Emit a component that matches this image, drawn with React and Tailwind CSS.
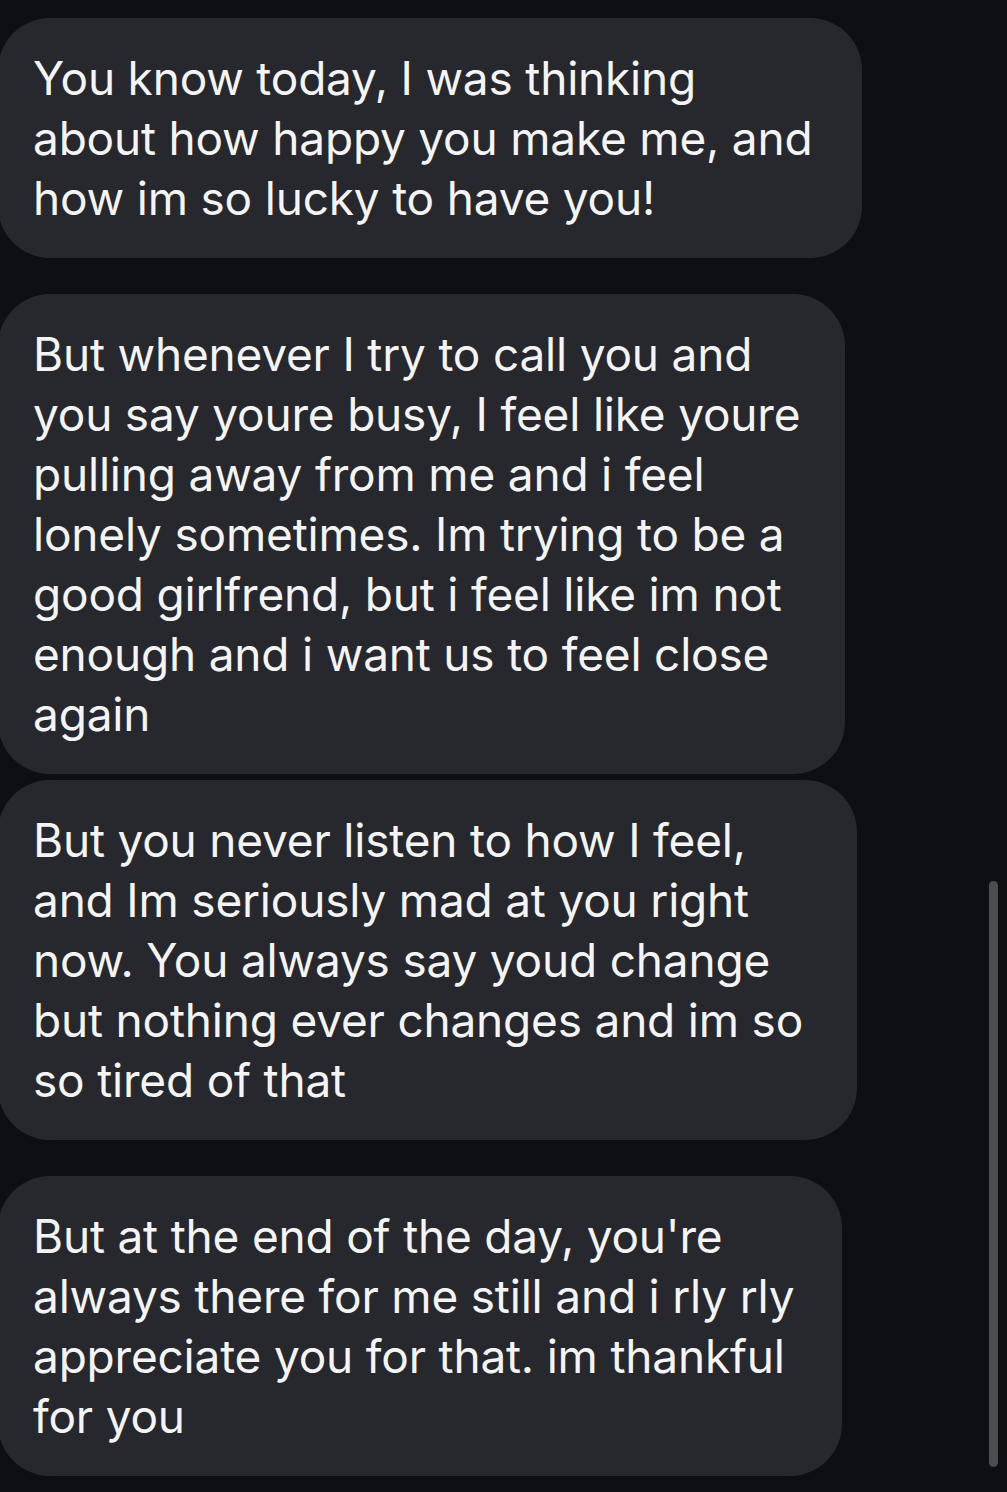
const messages = [
  {
    width: 'w-[864px]',
    lines: [
      'You know today, I was thinking',
      'about how happy you make me, and',
      'how im so lucky to have you!',
    ],
    gap: 'mb-[36px]',
  },
  {
    width: 'w-[847px]',
    lines: [
      'But whenever I try to call you and',
      'you say youre busy, I feel like youre',
      'pulling away from me and i feel',
      'lonely sometimes. Im trying to be a',
      'good girlfrend, but i feel like im not',
      'enough and i want us to feel close',
      'again',
    ],
    gap: 'mb-[6px]',
  },
  {
    width: 'w-[859px]',
    lines: [
      'But you never listen to how I feel,',
      'and Im seriously mad at you right',
      'now. You always say youd change',
      'but nothing ever changes and im so',
      'so tired of that',
    ],
    gap: 'mb-[36px]',
  },
  {
    width: 'w-[844px]',
    lines: [
      "But at the end of the day, you're",
      'always there for me still and i rly rly',
      'appreciate you for that. im thankful',
      'for you',
    ],
    gap: '',
  },
];

const Bubble = ({ width, lines, gap }) => (
  <div className={`${width} ${gap} -ml-[2px] rounded-[52px] bg-[#26282d] pl-[35px] py-[30px]`}>
    {lines.map((line, i) => (
      <div key={i} className="h-[60px] leading-[60px] whitespace-nowrap text-[46px] text-[#f4f4f5] tracking-[-0.2px]">
        {line}
      </div>
    ))}
  </div>
);

export default function App() {
  return (
    <div className="relative w-[1007px] h-[1492px] overflow-hidden bg-[#0c0f14] pt-[18px] font-['Inter',sans-serif]">
      <div className="flex flex-col items-start">
        {messages.map((m, i) => (
          <Bubble key={i} {...m} />
        ))}
      </div>

      {/* scroll indicator */}
      <div className="absolute left-[989px] top-[881px] w-[9px] h-[586px] rounded-full bg-[#4b4d51]" />
    </div>
  );
}
